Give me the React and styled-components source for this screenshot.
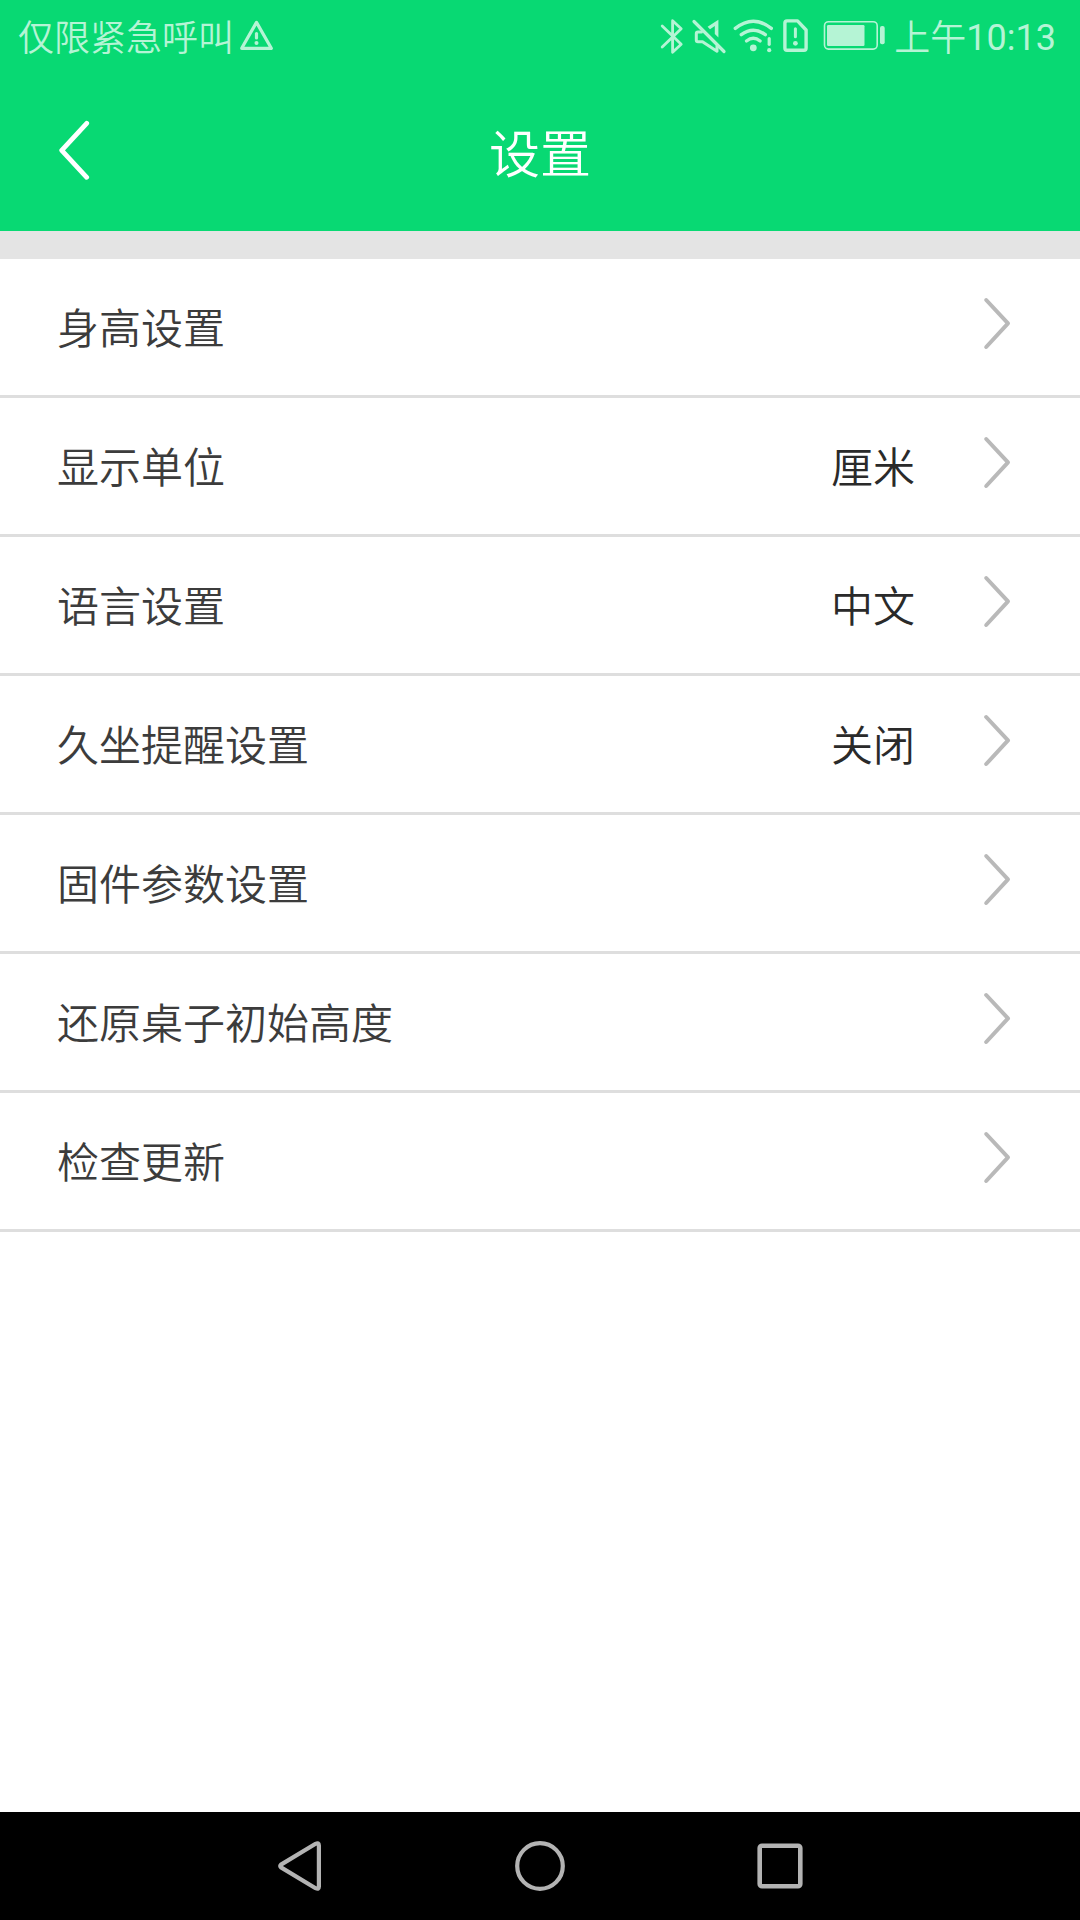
import React from "react";
import styled, { createGlobalStyle } from "styled-components";

const GlobalStyle = createGlobalStyle`
  html, body { margin: 0; padding: 0; background: #fff; }
  * { box-sizing: border-box; }
  svg { display: block; flex: none; }
`;

const Screen = styled.div`
  width: 1080px;
  height: 1920px;
  display: flex;
  flex-direction: column;
  background: #fff;
  overflow: hidden;
  font-family: Roboto, "Noto Sans CJK SC", sans-serif;
  font-weight: 350;
`;

const Header = styled.header`
  height: 231px;
  flex: none;
  background: #08d973;
`;

const StatusBar = styled.div`
  height: 72px;
  padding: 0 24px 0 18px;
  display: flex;
  align-items: center;
  justify-content: space-between;
  color: #b5f4d5;
`;

const StatusGroup = styled.div`
  height: 72px;
  display: flex;
  align-items: center;
`;

const StatusText = styled.span`
  font-size: 36px;
  line-height: 42px;
  white-space: nowrap;
  padding-top: 6px;
`;

const TimeText = styled(StatusText)`
  margin-left: 8px;
`;

const Digits = styled.span`
  font-weight: 400;
  line-height: 1;
  vertical-align: 1px;
`;

const StatusIcon = styled.svg`
  width: ${(p) => p.$w}px;
  height: 72px;
  margin-left: ${(p) => p.$gap || 0}px;
  fill: none;
  stroke: currentColor;
  stroke-linecap: round;
  stroke-linejoin: round;
`;

const TitleBar = styled.div`
  height: 159px;
  padding: 0 56px;
  display: grid;
  grid-template-columns: 40px 1fr 40px;
  align-items: start;
`;

const BackIcon = styled.svg`
  width: 40px;
  height: 60px;
  margin-top: 48px;
`;

const Title = styled.h1`
  margin: 48px 0 0;
  text-align: center;
  color: #fff;
  font-size: 51px;
  line-height: 72px;
  font-weight: 350;
`;

const Divider = styled.div`
  height: 28px;
  flex: none;
  background: #e4e4e4;
`;

const List = styled.ul`
  margin: 0;
  padding: 0;
  list-style: none;
  flex: 1;
`;

const Row = styled.li`
  height: 139px;
  padding: 0 68px 0 57px;
  display: flex;
  align-items: center;
  border-bottom: 3px solid #dedede;
`;

const Label = styled.span`
  flex: 1;
  padding-top: 6px;
  font-size: 42px;
  line-height: 60px;
  color: #3c3c3c;
`;

const Value = styled.span`
  padding-top: 6px;
  margin-right: 67px;
  font-size: 42px;
  line-height: 60px;
  color: #2a2a2a;
`;

const Chevron = styled.svg`
  width: 30px;
  height: 56px;
  margin-bottom: 8px;
`;

const NavBar = styled.nav`
  height: 108px;
  flex: none;
  padding: 0 180px;
  display: grid;
  grid-template-columns: repeat(3, 1fr);
  align-items: center;
  justify-items: center;
  background: #000;
`;

const NavIcon = styled.svg`
  width: 60px;
  height: 60px;
  fill: none;
  stroke: #b3b3b3;
  stroke-width: ${(p) => p.$stroke};
  stroke-linejoin: round;
`;

const settings = [
  { label: "身高设置" },
  { label: "显示单位", value: "厘米" },
  { label: "语言设置", value: "中文" },
  { label: "久坐提醒设置", value: "关闭" },
  { label: "固件参数设置" },
  { label: "还原桌子初始高度" },
  { label: "检查更新" },
];

export default function App() {
  return (
    <Screen>
      <GlobalStyle />
      <Header>
        <StatusBar>
          <StatusGroup>
            <StatusText>仅限紧急呼叫</StatusText>
            <StatusIcon $w={34} $gap={6} viewBox="240 0 34 72">
              <path d="M256.5 22.4 L271.3 48.3 H241.7 Z" strokeWidth="3.2" />
              <path d="M256.5 33.5 V38" strokeWidth="3.2" />
              <circle cx="256.5" cy="43" r="2" fill="currentColor" stroke="none" />
            </StatusIcon>
          </StatusGroup>
          <StatusGroup>
            <StatusIcon $w={24} viewBox="660 0 24 72" strokeWidth="2.8">
              <path d="M662.2 26 L681.2 44.3 L672.6 52.3 V20.7 L681.2 28.7 L662.2 47" />
            </StatusIcon>
            <StatusIcon $w={36} $gap={7} viewBox="691 0 36 72" strokeWidth="3">
              <path d="M694 21.5 L724 51.5" strokeWidth="3.2" />
              <path d="M701.5 32 H698 Q696.3 32 696.3 33.7 V40 Q696.3 41.7 698 41.7 H702.5 L717 51.2 V46" />
              <path d="M707.6 26.8 L718.4 19.8 V37.6 L714.8 34 V25.9 L710 29.2 Z" fill="currentColor" stroke="none" />
            </StatusIcon>
            <StatusIcon $w={41} $gap={6} viewBox="733 0 41 72" strokeWidth="3.4">
              <path d="M735.3 28.4 Q753.3 14 771.3 28.4" />
              <path d="M741.3 34.7 Q753.3 25.6 765.3 34.7" />
              <path d="M746.5 41 Q753.3 35.6 760.1 41" />
              <circle cx="753.3" cy="47.8" r="3.4" fill="currentColor" stroke="none" />
              <path d="M769.2 38.7 V44.3" strokeWidth="3.2" />
              <circle cx="769.2" cy="50.2" r="2.1" fill="currentColor" stroke="none" />
            </StatusIcon>
            <StatusIcon $w={27} $gap={8} viewBox="782 0 27 72" strokeWidth="3.4">
              <path d="M787 20.9 H797.5 L806.1 30 V48 Q806.1 50.2 804 50.2 H787 Q784.9 50.2 784.9 48 V23 Q784.9 20.9 787 20.9 Z" />
              <path d="M795.4 28.7 V36.7" strokeWidth="3" />
              <circle cx="795.4" cy="43.3" r="2.4" fill="currentColor" stroke="none" />
            </StatusIcon>
            <StatusIcon $w={64} $gap={13} viewBox="822 0 64 72">
              <rect x="824.5" y="21.7" width="52.7" height="27.4" rx="4" strokeWidth="1.6" />
              <rect x="827" y="25" width="37.5" height="21" rx="1.2" fill="currentColor" stroke="none" />
              <rect x="880" y="26" width="4.7" height="18.3" rx="2" fill="currentColor" stroke="none" />
            </StatusIcon>
            <TimeText>
              上午<Digits>10:13</Digits>
            </TimeText>
          </StatusGroup>
        </StatusBar>
        <TitleBar>
          <BackIcon viewBox="56 120 40 60" fill="none" stroke="#fff" strokeWidth="4.8" strokeLinecap="round" strokeLinejoin="round">
            <path d="M86.7 123.3 L61.7 150.3 L86.7 177.3" />
          </BackIcon>
          <Title>设置</Title>
        </TitleBar>
      </Header>
      <Divider />
      <List>
        {settings.map(({ label, value }) => (
          <Row key={label}>
            <Label>{label}</Label>
            {value && <Value>{value}</Value>}
            <Chevron viewBox="982 295 30 56" fill="none" stroke="#b9b9b9" strokeWidth="4" strokeLinecap="round" strokeLinejoin="round">
              <path d="M986.2 300 L1008 323.4 L986.2 347" />
            </Chevron>
          </Row>
        ))}
      </List>
      <NavBar>
        <NavIcon $stroke={4.2} viewBox="270 1836 60 60">
          <path d="M281 1864.6 L315.6 1843.8 Q318.9 1842.2 318.9 1845.5 V1886.5 Q318.9 1889.8 315.6 1888.2 L281 1867.4 Q279.4 1866 281 1864.6 Z" />
        </NavIcon>
        <NavIcon $stroke={4.2} viewBox="510 1836 60 60">
          <circle cx="540" cy="1866" r="22.8" />
        </NavIcon>
        <NavIcon $stroke={4.6} viewBox="750 1836 60 60">
          <rect x="759.7" y="1845.7" width="40.6" height="40.6" rx="2.3" />
        </NavIcon>
      </NavBar>
    </Screen>
  );
}
